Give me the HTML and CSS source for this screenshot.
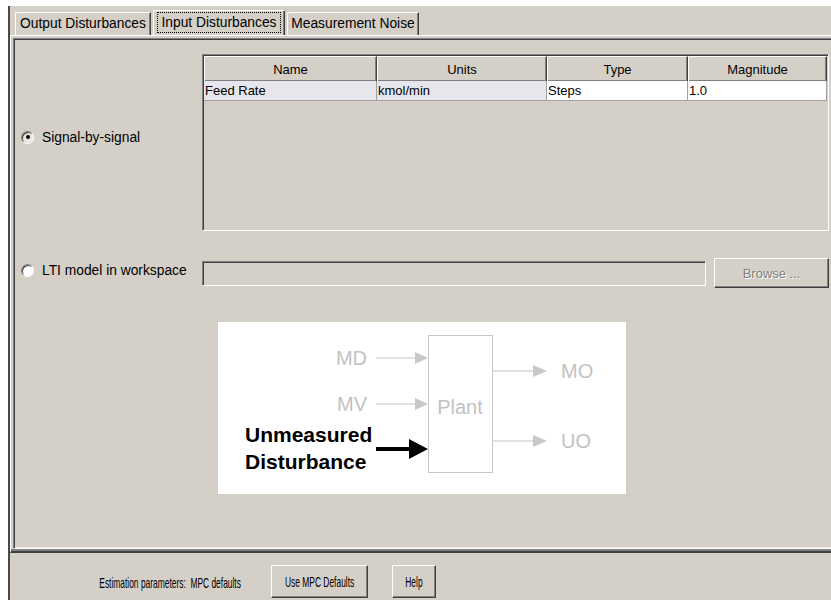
FILE: index.html
```html
<!DOCTYPE html>
<html lang="en">
<head>
    <meta charset="UTF-8">
    <title>Input Disturbances</title>
    <link rel="stylesheet" href="styles.css">
</head>
<body>
    <div class="window">
        <div class="tabs">
            <div class="tab tab-output">Output Disturbances</div>
            <div class="tab tab-input selected"><span class="focus">Input Disturbances</span></div>
            <div class="tab tab-noise">Measurement Noise</div>
        </div>

        <div class="tab-panel">
            <div class="inner">
                <div class="option-grid">
                    <div class="radio-label first"><span class="radio checked"></span>Signal-by-signal</div>
                    <div class="table-pane">
                        <table>
                            <colgroup>
                                <col class="c-name">
                                <col class="c-units">
                                <col class="c-type">
                                <col class="c-mag">
                            </colgroup>
                            <tr>
                                <th>Name</th>
                                <th>Units</th>
                                <th>Type</th>
                                <th>Magnitude</th>
                            </tr>
                            <tr>
                                <td class="locked">Feed Rate</td>
                                <td class="locked">kmol/min</td>
                                <td>Steps</td>
                                <td>1.0</td>
                            </tr>
                        </table>
                    </div>

                    <div class="radio-label second"><span class="radio"></span>LTI model in workspace</div>
                    <div class="lti-row">
                        <div class="textfield"></div>
                        <button class="btn browse" disabled>Browse ...</button>
                    </div>
                </div>

                <div class="diagram">
                    <svg width="408" height="172" viewBox="0 0 408 172">
                        <rect x="210.5" y="13.5" width="64" height="137" fill="none" stroke="#c8c8c8"/>
                        <text x="242" y="92" class="grey" text-anchor="middle">Plant</text>

                        <text x="149" y="43" class="grey" text-anchor="end">MD</text>
                        <line x1="158" y1="36" x2="200" y2="36" stroke="#c4c4c4"/>
                        <polygon points="197,30 210,36 197,42" fill="#c8c8c8"/>

                        <text x="149" y="89" class="grey" text-anchor="end">MV</text>
                        <line x1="158" y1="82" x2="200" y2="82" stroke="#c4c4c4"/>
                        <polygon points="197,76 210,82 197,88" fill="#c8c8c8"/>

                        <line x1="275" y1="49" x2="318" y2="49" stroke="#c4c4c4"/>
                        <polygon points="315,43 329,49 315,55" fill="#c8c8c8"/>
                        <text x="343" y="56" class="grey">MO</text>

                        <line x1="275" y1="119" x2="318" y2="119" stroke="#c4c4c4"/>
                        <polygon points="315,113 329,119 315,125" fill="#c8c8c8"/>
                        <text x="343" y="126" class="grey">UO</text>

                        <text x="27" y="120" class="bold">Unmeasured</text>
                        <text x="27" y="147" class="bold">Disturbance</text>
                        <line x1="158" y1="127" x2="195" y2="127" stroke="#000" stroke-width="4"/>
                        <polygon points="191,117 210,127 191,137" fill="#000"/>
                    </svg>
                </div>
            </div>
        </div>

        <div class="bottom-bar">
            <div class="status"><span class="squeeze">Estimation parameters:&nbsp; MPC defaults</span></div>
            <button class="btn use-defaults"><span class="squeeze">Use MPC Defaults</span></button>
            <button class="btn help"><span class="squeeze">Help</span></button>
        </div>
    </div>
</body>
</html>
```

FILE: styles.css
```css
body {
    margin: 0;
    background-color: #fff;
    font-family: "Liberation Sans", Arial, sans-serif;
    font-size: 13px;
    color: #000;
    overflow: hidden;
}

.window {
    margin: 6px 0 0 8px;
    width: 830px;
    height: 594px;
    background-color: #d4d0c8;
    border-left: 2px solid #4a4a4a;
}

/* tabs */
.tabs {
    display: flex;
    align-items: flex-end;
    height: 25px;
    padding: 4px 0 0 5px;
}

.tab {
    box-sizing: border-box;
    height: 23px;
    line-height: 22px;
    font-size: 13.8px;
    text-align: center;
    white-space: nowrap;
    border-top: 1px solid #fff;
    border-left: 1px solid #fff;
    border-right: 1px solid #404040;
    border-top-left-radius: 2px;
    box-shadow: inset -1px 0 0 #808080;
}

.tab-output {
    width: 136px;
    margin-right: 2px;
}

.tab-input {
    width: 132px;
    margin-right: 2px;
}

.tab-noise {
    width: 132px;
}

.tab.selected {
    height: 25px;
    line-height: 20px;
    padding-top: 2px;
}

.focus {
    display: inline-block;
    line-height: 19px;
    padding: 0 3px;
    outline: 1px dotted #000;
}

/* tab content */
.tab-panel {
    border-top: 1px solid #fff;
    border-left: 1px solid #fff;
    border-bottom: 2px solid #404040;
    padding: 2px 0 2px 2px;
    box-shadow: inset 0 -2px 0 #808080;
}

.inner {
    box-sizing: border-box;
    height: 511px;
    border-top: 1px solid #808080;
    border-left: 1px solid #808080;
    border-bottom: 1px solid #fff;
    box-shadow: inset 1px 1px 0 #404040, inset 0 -1px 0 #ecebe6;
    padding: 15px 0 0 1px;
}

.option-grid {
    display: grid;
    grid-template-columns: 187px 627px;
    row-gap: 27px;
}

.radio-label {
    display: flex;
    align-items: center;
    align-self: center;
    padding-left: 6px;
    font-size: 13.8px;
    white-space: nowrap;
}

.radio-label.first {
    margin-bottom: 11px;
}

.radio-label.second {
    margin-bottom: 6px;
}

.radio {
    box-sizing: border-box;
    flex: none;
    width: 13px;
    height: 13px;
    margin-right: 8px;
    border-radius: 50%;
    border: 1px solid;
    border-color: #808080 #fff #fff #808080;
    background-color: #fff;
    box-shadow: inset 1px 1px 0 #404040;
    position: relative;
}

.radio.checked {
    background-color: #e8e6e1;
}

.radio.checked::after {
    content: "";
    position: absolute;
    left: 3.5px;
    top: 3.5px;
    width: 4px;
    height: 4px;
    border-radius: 50%;
    background-color: #000;
}

/* table */
.table-pane {
    box-sizing: border-box;
    height: 177px;
    border: 1px solid;
    border-color: #808080 #fff #fff #808080;
    box-shadow: inset 1px 1px 0 #404040;
    padding: 1px 0 0 1px;
}

table {
    border-collapse: separate;
    border-spacing: 0;
    table-layout: fixed;
    width: 623px;
}

.c-name { width: 173px; }
.c-units { width: 170px; }
.c-type { width: 141px; }
.c-mag { width: 139px; }

th {
    height: 25px;
    padding: 0;
    font-weight: normal;
    background-color: #d4d0c8;
    border-top: 1px solid #fff;
    border-left: 1px solid #fff;
    border-right: 1px solid #404040;
    box-shadow: inset -1px -1px 0 #808080;
    box-sizing: border-box;
}

td {
    height: 20px;
    padding: 0 0 0 1px;
    background-color: #fff;
    border-right: 1px solid #a0a0a0;
    border-bottom: 1px solid #a0a0a0;
    box-sizing: border-box;
    white-space: nowrap;
}

td.locked {
    background-color: #e6e6ec;
}

/* LTI row */
.lti-row {
    display: flex;
    align-items: center;
    height: 30px;
}

.textfield {
    box-sizing: border-box;
    width: 505px;
    height: 25px;
    border: 1px solid;
    border-color: #808080 #fff #fff #808080;
    box-shadow: inset 1px 1px 0 #404040;
}

.btn {
    font-family: "Liberation Sans", Arial, sans-serif;
    font-size: 13px;
    color: #000;
    background-color: #d4d0c8;
    border: 1px solid;
    border-color: #fff #404040 #404040 #fff;
    box-shadow: inset -1px -1px 0 #808080;
    padding: 0;
}

.browse {
    width: 115px;
    height: 30px;
    margin-left: 8px;
    color: #808080;
    text-shadow: 1px 1px 0 #fff;
}

/* diagram */
.diagram {
    width: 408px;
    height: 172px;
    margin: 34px 0 0 203px;
    background-color: #fff;
}

.diagram svg {
    display: block;
}

.diagram .grey {
    font-family: "Liberation Sans", Arial, sans-serif;
    font-size: 20px;
    fill: #c2c2c2;
}

.diagram .bold {
    font-family: "Liberation Sans", Arial, sans-serif;
    font-size: 21px;
    font-weight: bold;
    fill: #000;
}

/* bottom bar */
.bottom-bar {
    display: flex;
    align-items: center;
    padding: 12px 0 0 88px;
}

.squeeze {
    display: inline-block;
    font-size: 14.5px;
    transform: scaleX(0.58);
    white-space: nowrap;
}

.status {
    width: 144px;
    display: flex;
    justify-content: center;
    margin-top: 2px;
}

.bottom-bar .btn {
    height: 33px;
    display: flex;
    justify-content: center;
    align-items: center;
    overflow: hidden;
}

.use-defaults {
    width: 97px;
    margin-left: 29px;
}

.help {
    width: 44px;
    margin-left: 24px;
}
```
